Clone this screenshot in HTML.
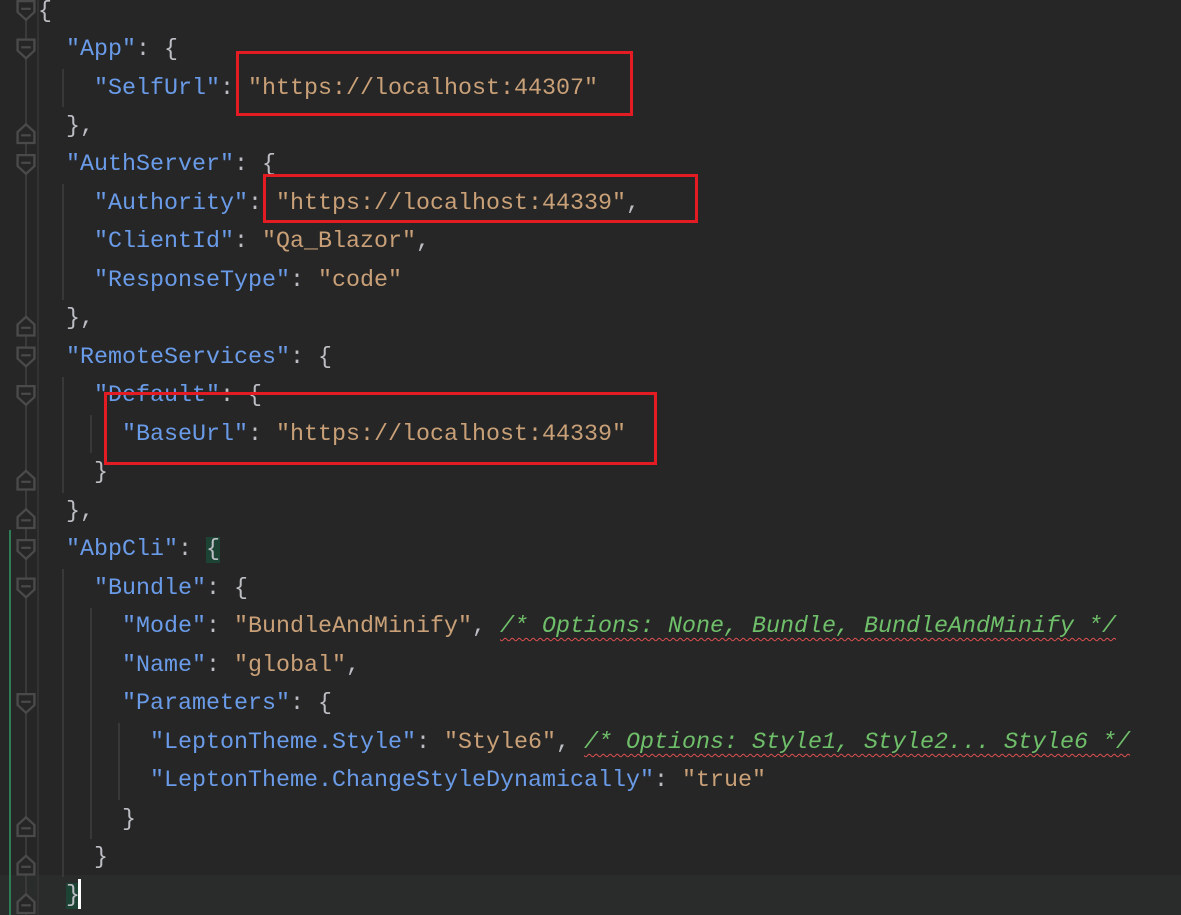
<!DOCTYPE html>
<html><head><meta charset="utf-8"><style>
html,body{margin:0;padding:0}
body{width:1181px;height:915px;background:#262626;position:relative;overflow:hidden;font-family:"Liberation Mono",monospace;font-size:23.33px}
.ln{position:absolute;left:38px;height:38px;line-height:38px;white-space:pre;color:#bcbec4;margin-top:2px}
.k{color:#6a9be8}.s{color:#c9a077}.c{color:#6fbf6a;font-style:italic;text-decoration:underline wavy #e05050;text-decoration-thickness:1px;text-underline-offset:5px}
.g{position:absolute;width:2px;background:#383838}
.box{position:absolute;border:3px solid #e31b23;box-sizing:border-box}
</style></head><body>
<div style="position:absolute;left:0;top:875px;width:1181px;height:40px;background:#2a2c2c"></div>
<div style="position:absolute;left:37px;top:0;width:2px;height:915px;background:#333"></div>
<div style="position:absolute;left:25px;top:0;width:2px;height:915px;background:#3a3a3a"></div>
<div style="position:absolute;left:9px;top:530px;width:2px;height:385px;background:#2e7d56"></div>
<svg style="position:absolute;left:0;top:0" width="40" height="915">
<g fill="#262626" stroke="#4a4a4a" stroke-width="2" transform="translate(26,0) scale(1.2,1.1) translate(-26,0)">
<path d="M19,1h14v10l-7,7l-7,-7z"/><path d="M22,8h8"/>
<path d="M19,36h14v10l-7,7l-7,-7z"/><path d="M22,43h8"/>
<path d="M19,141h14v10l-7,7l-7,-7z"/><path d="M22,148h8"/>
<path d="M19,316h14v10l-7,7l-7,-7z"/><path d="M22,323h8"/>
<path d="M19,351h14v10l-7,7l-7,-7z"/><path d="M22,358h8"/>
<path d="M19,491h14v10l-7,7l-7,-7z"/><path d="M22,498h8"/>
<path d="M19,526h14v10l-7,7l-7,-7z"/><path d="M22,533h8"/>
<path d="M19,631h14v10l-7,7l-7,-7z"/><path d="M22,638h8"/>
<path d="M19,130v-10l7,-7l7,7v10z"/><path d="M22,123h8"/>
<path d="M19,305v-10l7,-7l7,7v10z"/><path d="M22,298h8"/>
<path d="M19,445v-10l7,-7l7,7v10z"/><path d="M22,438h8"/>
<path d="M19,480v-10l7,-7l7,7v10z"/><path d="M22,473h8"/>
<path d="M19,760v-10l7,-7l7,7v10z"/><path d="M22,753h8"/>
<path d="M19,795v-10l7,-7l7,7v10z"/><path d="M22,788h8"/>
<path d="M19,830v-10l7,-7l7,7v10z"/><path d="M22,823h8"/>
</g></svg>
<div class="g" style="left:62px;top:69px;height:38px"></div>
<div class="g" style="left:62px;top:184px;height:116px"></div>
<div class="g" style="left:62px;top:377px;height:116px"></div>
<div class="g" style="left:90px;top:415px;height:38px"></div>
<div class="g" style="left:62px;top:569px;height:308px"></div>
<div class="g" style="left:90px;top:608px;height:231px"></div>
<div class="g" style="left:118px;top:723px;height:77px"></div>

<div class="ln" style="top:-9px">{</div>
<div class="ln" style="top:29px">  <span class="k">"App"</span>: {</div>
<div class="ln" style="top:68px">    <span class="k">"SelfUrl"</span>: <span class="s">"https://localhost:44307"</span></div>
<div class="ln" style="top:106px">  },</div>
<div class="ln" style="top:144px">  <span class="k">"AuthServer"</span>: {</div>
<div class="ln" style="top:183px">    <span class="k">"Authority"</span>: <span class="s">"https://localhost:44339"</span>,</div>
<div class="ln" style="top:221px">    <span class="k">"ClientId"</span>: <span class="s">"Qa_Blazor"</span>,</div>
<div class="ln" style="top:260px">    <span class="k">"ResponseType"</span>: <span class="s">"code"</span></div>
<div class="ln" style="top:298px">  },</div>
<div class="ln" style="top:337px">  <span class="k">"RemoteServices"</span>: {</div>
<div class="ln" style="top:375px">    <span class="k">"Default"</span>: {</div>
<div class="ln" style="top:414px">      <span class="k">"BaseUrl"</span>: <span class="s">"https://localhost:44339"</span></div>
<div class="ln" style="top:452px">    }</div>
<div class="ln" style="top:491px">  },</div>
<div class="ln" style="top:529px">  <span class="k">"AbpCli"</span>: <span style="background:#1d4335">{</span></div>
<div class="ln" style="top:568px">    <span class="k">"Bundle"</span>: {</div>
<div class="ln" style="top:606px">      <span class="k">"Mode"</span>: <span class="s">"BundleAndMinify"</span>, <span class="c">/* Options: None, Bundle, BundleAndMinify */</span></div>
<div class="ln" style="top:645px">      <span class="k">"Name"</span>: <span class="s">"global"</span>,</div>
<div class="ln" style="top:683px">      <span class="k">"Parameters"</span>: {</div>
<div class="ln" style="top:722px">        <span class="k">"LeptonTheme.Style"</span>: <span class="s">"Style6"</span>, <span class="c">/* Options: Style1, Style2... Style6 */</span></div>
<div class="ln" style="top:760px">        <span class="k">"LeptonTheme.ChangeStyleDynamically"</span>: <span class="s">"true"</span></div>
<div class="ln" style="top:799px">      }</div>
<div class="ln" style="top:837px">    }</div>
<div class="ln" style="top:875px">  <span style="background:#1d4335">}</span></div>
<div style="position:absolute;left:78px;top:879px;width:3px;height:30px;background:#fff"></div>

<div class="box" style="left:236px;top:51px;width:397px;height:65px"></div>
<div class="box" style="left:263px;top:174px;width:435px;height:49px"></div>
<div class="box" style="left:104px;top:392px;width:553px;height:73px"></div>
</body></html>
